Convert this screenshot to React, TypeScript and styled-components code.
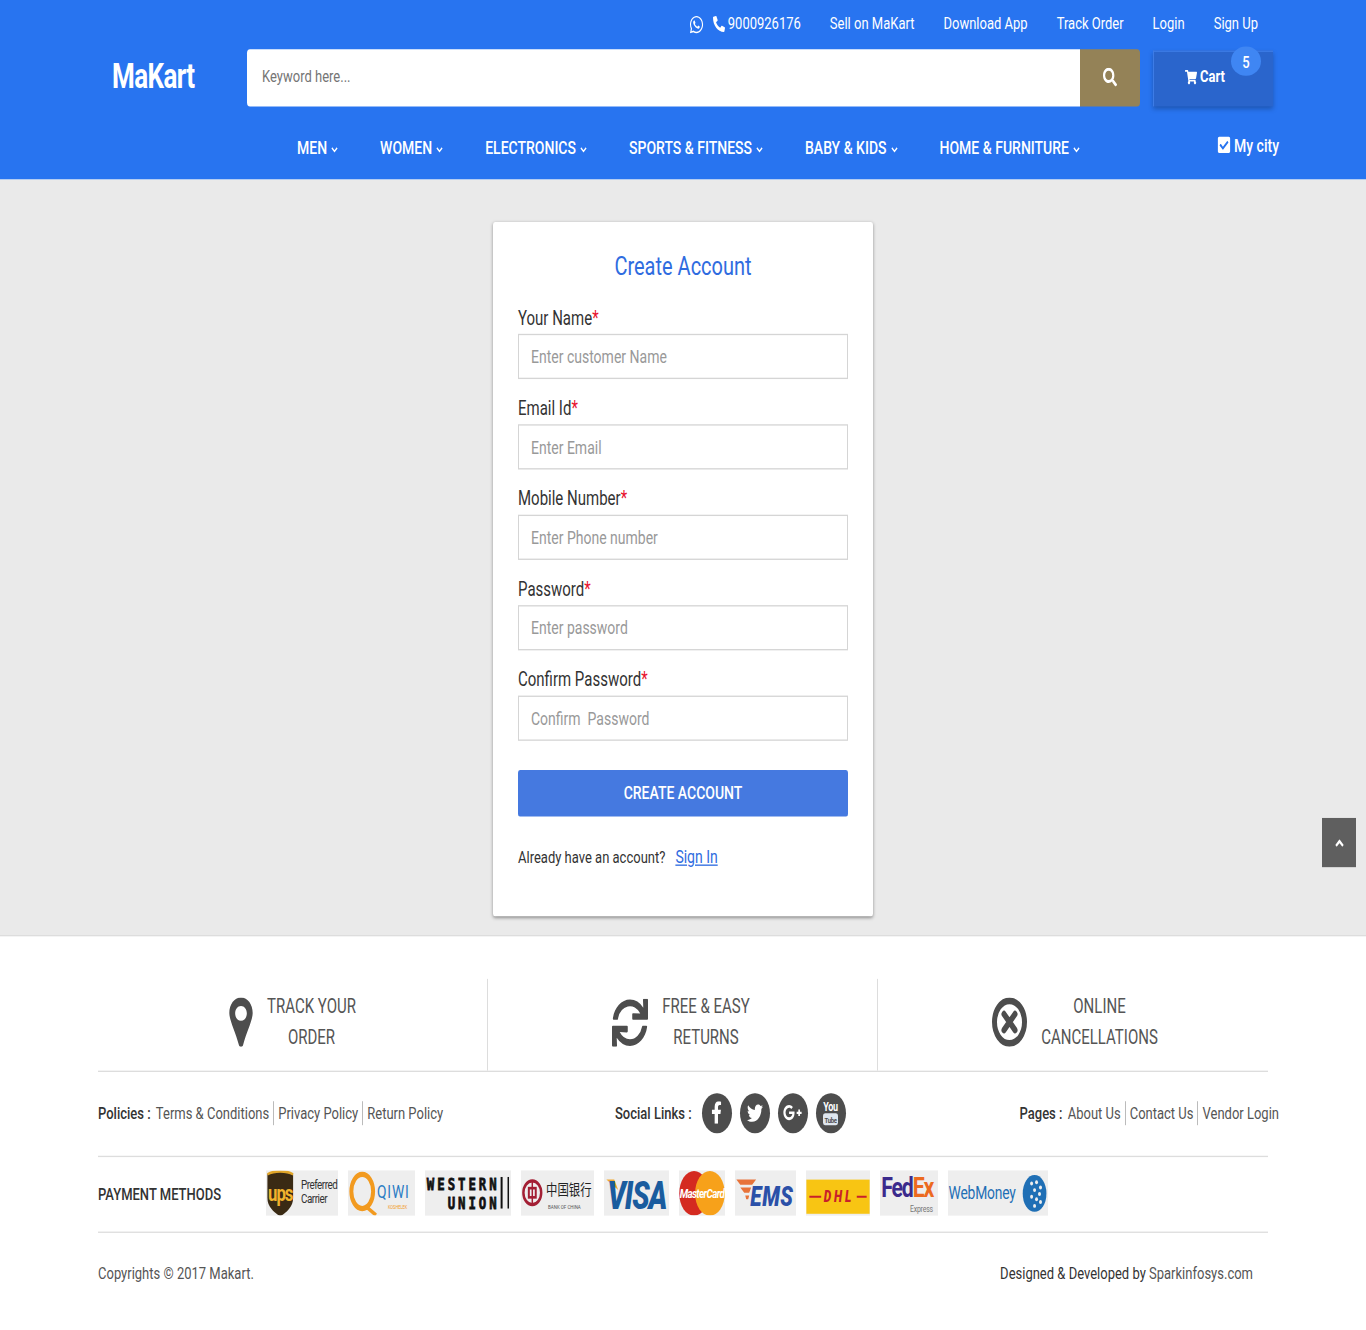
import React from "react";
import styled, { createGlobalStyle } from "styled-components";
import { FaWhatsapp, FaPhone, FaSearch, FaShoppingCart, FaCheckSquare, FaSync, FaFacebookF, FaTwitter, FaGooglePlusG } from "react-icons/fa";

const Global = createGlobalStyle`
  html, body { margin: 0; padding: 0; background: #fff; }
  * { box-sizing: border-box; }
  body { font-family: Roboto, "Liberation Sans", sans-serif; color: #333; }
`;

const Viewport = styled.div`width: 1366px; height: 1330px; overflow: hidden;`;
const Stretch = styled.div`
  position: relative; width: 1366px; height: 1000px;
  transform: scaleY(1.33); transform-origin: 0 0; background: #fff;
`;

const Header = styled.header`height: 134.6px; background: #2874f0; color: #fff;`;
const TopBar = styled.div`
  height: 37.3px; display: flex; justify-content: flex-end; align-items: center;
  gap: 29px; padding-right: 108px; font-size: 13px; padding-bottom: 2px;
`;
const TopLink = styled.a`display: flex; align-items: center; gap: 3px; color: #fff;`;
const SearchRow = styled.div`height: 43px; display: flex; padding-left: 112px;`;
const Logo = styled.div`width: 135px; font-size: 26px; font-weight: 700; letter-spacing: -0.6px; line-height: 41px;`;
const SearchBox = styled.div`width: 893px; display: flex;`;
const SearchInput = styled.input`
  flex: 1; height: 43px; border: 0; outline: 0; padding: 0 15px 3px; background: #fff;
  border-radius: 3px 0 0 3px; font: 13px Roboto, sans-serif;
  &::placeholder { color: #757575; opacity: 1; }
`;
const SearchButton = styled.button`
  width: 60px; height: 43px; padding: 0 0 1px; border: 0; background: #948257; color: #fff; font-size: 14px;
  border-radius: 0 3px 3px 0; display: flex; align-items: center; justify-content: center;
`;
const CartButton = styled.div`
  position: relative; width: 120px; height: 42px; margin-top: 1px; margin-left: 13px; background: #2a65cc;
  box-shadow: 0 2px 4px rgba(0,0,0,.25); display: flex; align-items: center; justify-content: center; gap: 3px;
  font-size: 13px; font-weight: 700; padding: 0 17px 4px 0; border-top: 1px solid #3d7ce6; border-left: 1px solid #3d7ce6;
`;
const Badge = styled.span`
  position: absolute; top: -4.500px; right: 12px; width: 30px; height: 22.500px; border-radius: 50%;
  background: #3f86f3; font-size: 13px; font-weight: 500; display: flex; align-items: center; justify-content: center;
`;
const NavRow = styled.nav`height: 54.3px; display: flex; align-items: center; padding: 7px 87px 0 297px;`;
const NavList = styled.div`display: flex; gap: 42px; font-size: 14px; font-weight: 500;`;
const NavItem = styled.a`display: flex; align-items: center; gap: 4px; color: #fff;`;
const ChevronMark = styled.svg`width: 7px; height: 5px; margin-top: 3px; fill: none; stroke: currentColor; stroke-width: 1.400;`;
const MyCity = styled.div`
  margin-left: auto; display: flex; align-items: center; gap: 3px; font-size: 14px; font-weight: 500; margin-bottom: 3px;
`;

const Main = styled.main`height: 568.4px; background: #eaeaea; padding-top: 32.4px;`;
const Card = styled.section`
  width: 380px; height: 522px; margin: 0 auto; padding: 20.5px 25px 0; background: #fff;
  border-radius: 2px; box-shadow: 0 1px 3px rgba(0,0,0,.4);
`;
const Title = styled.h1`
  margin: 0 0 2.5px; font-size: 20px; line-height: 27px; font-weight: 400; color: #2f6ce0; text-align: center;
`;
const Field = styled.div`height: 67.9px; padding-top: 8px;`;
const Label = styled.label`display: block; height: 26px; line-height: 29px; font-size: 15px; color: #333;`;
const Star = styled.span`color: #e8112d;`;
const Input = styled.input`
  display: block; width: 100%; height: 34px; border: 1px solid #d5d5d5; border-bottom-width: 1.5px; outline: 0; padding: 0 12px;
  background: #fff; font: 14px Roboto, sans-serif;
  &::placeholder { color: #999; opacity: 1; }
`;
const Submit = styled.button`
  display: block; width: 100%; height: 35.3px; margin-top: 22.5px; padding: 0 0 2px; border: 0; border-radius: 2px; background: #4579e0; color: #fff;
  font: 500 14px Roboto, sans-serif;
`;
const SignLine = styled.p`margin: 20px 0 0; line-height: 20px; font-size: 13px; color: #333;`;
const SignLink = styled.a`margin-left: 10px; font-size: 14px; color: #2f6ce0; text-decoration: underline;`;

const ScrollTop = styled.div`
  position: absolute; left: 1322px; top: 615px; width: 34px; height: 37px; background: #5f5f5f; color: #fff;
  display: flex; align-items: center; justify-content: center;
`;
const CaretMark = styled.svg`width: 9px; height: 6px; fill: none; stroke: currentColor; stroke-width: 2;`;

const Footer = styled.footer`border-top: 1px solid #ddd; height: 296.6px; padding: 32px 98px 0;`;
const Features = styled.div`width: 1170px; display: grid; grid-template-columns: repeat(3, 390px); border-bottom: 1px solid #ddd;`;
const Feature = styled.div<{ $last?: boolean; $left?: number; $right?: number }>`
  height: 69px; padding: 0 ${p => p.$right || 0}px 3px ${p => p.$left || 0}px; display: flex; align-items: center; justify-content: center; gap: 14px;
  border-right: ${p => (p.$last ? "0" : "1px solid #ddd")};
  color: #4d4d4d;
`;
const FeatureText = styled.div`font-size: 15px; line-height: 22.6px; text-align: center; color: #555;`;
const LinksRow = styled.div`width: 1181px; height: 62.6px; padding-bottom: 1px; display: flex; align-items: center; font-size: 13px; color: #555;`;
const Group = styled.div<{ $w?: number }>`display: flex; align-items: center; ${p => (p.$w ? `width: ${p.$w}px;` : "margin-left: auto;")}`;
const Strong = styled.b`font-weight: 500; color: #333; margin-right: 2px; white-space: pre;`;
const PolicyLink = styled.a<{ $first?: boolean; $end?: boolean }>`
  border-left: ${p => (p.$first ? "0" : "1px solid #bbb")}; line-height: 18px; white-space: nowrap;
  padding-left: ${p => (p.$first ? 0 : 4)}px; padding-right: ${p => (p.$end ? 0 : 4)}px;
`;
const SocialRow = styled.div`display: flex; gap: 8px; margin-left: 8px;`;
const SocialCircle = styled.a`
  width: 30px; height: 30.5px; border-radius: 50%; background: #4d4d4d; color: #fff; display: flex; align-items: center; justify-content: center; font-size: 15px;
`;
const YouTube = styled.span`display: flex; flex-direction: column; align-items: center; font-size: 9px; font-weight: 700; line-height: 9px; letter-spacing: -0.3px;`;
const Tube = styled.span`background: #dfe6ee; color: #4d4d4d; border-radius: 2px; padding: 0 1px; font-size: 6px; line-height: 9px;`;

const PaymentRow = styled.div`
  width: 1170px; height: 58px; padding-bottom: 1px; display: flex; align-items: center; border-top: 1.5px solid #ddd; border-bottom: 1.5px solid #ddd;
`;
const PayTitle = styled.div`width: 168px; font-size: 13px; font-weight: 500; color: #333;`;
const Logos = styled.div`display: flex; gap: 10px;`;
const Tile = styled.div<{ $w: number }>`
  width: ${p => p.$w}px; height: 34.6px; background: #eeeeee; overflow: hidden;
  svg { display: block; width: 100%; height: 100%; }
`;
const BottomRow = styled.div`width: 1170px; height: 61.500px; display: flex; align-items: center; justify-content: space-between; padding-right: 15px; font-size: 13px; color: #555;`;
const Dark = styled.span`color: #333;`;

const PinIcon = () => (
  <svg width="24" height="37" viewBox="0 0 24 38" fill="#4d4d4d" aria-hidden>
    <path fillRule="evenodd" d="M12 0C5 0 0 5.500 0 12c0 5.500 6 14 10 25 .7 1.400 3.300 1.400 4 0C18 26 24 17.500 24 12 24 5.500 19 0 12 0zm0 6.500c3.500 0 6 2.500 6 5.700S15.500 18 12 18 6 15.400 6 12.200 8.500 6.500 12 6.500z" />
  </svg>
);
const CancelIcon = () => (
  <svg width="35" height="37" viewBox="0 0 35 37" aria-hidden>
    <ellipse cx="17.500" cy="18.500" rx="15" ry="16" fill="none" stroke="#4d4d4d" strokeWidth="5" />
    <path d="M12 12.500l11 12M23 12.500l-11 12" stroke="#4d4d4d" strokeWidth="5" strokeLinecap="round" />
  </svg>
);

const fields = [
  ["Your Name", "Enter customer Name"],
  ["Email Id", "Enter Email"],
  ["Mobile Number", "Enter Phone number"],
  ["Password", "Enter password"],
  ["Confirm Password", "Confirm\u00a0 Password"],
];
const navs = ["MEN", "WOMEN", "ELECTRONICS", "SPORTS & FITNESS", "BABY & KIDS", "HOME & FURNITURE"];

export default function App() {
  return (
    <Viewport>
      <Global />
      <Stretch>
        <Header>
          <TopBar>
            <TopLink>
              <FaWhatsapp size={15} style={{ marginRight: 6, marginTop: 2 }} />
              <FaPhone size={12} style={{ transform: "scaleX(-1)", marginTop: 1 }} />
              9000926176
            </TopLink>
            <TopLink>Sell on MaKart</TopLink>
            <TopLink>Download App</TopLink>
            <TopLink>Track Order</TopLink>
            <TopLink>Login</TopLink>
            <TopLink>Sign Up</TopLink>
          </TopBar>
          <SearchRow>
            <Logo>MaKart</Logo>
            <SearchBox>
              <SearchInput placeholder="Keyword here..." />
              <SearchButton aria-label="Search"><FaSearch /></SearchButton>
            </SearchBox>
            <CartButton>
              <FaShoppingCart size={12} />
              Cart
              <Badge>5</Badge>
            </CartButton>
          </SearchRow>
          <NavRow>
            <NavList>
              {navs.map(n => (
                <NavItem key={n}>
                  {n}
                  <ChevronMark viewBox="0 0 8 5" aria-hidden><path d="M1 1l3 3 3-3" /></ChevronMark>
                </NavItem>
              ))}
            </NavList>
            <MyCity><FaCheckSquare size={14} />My city</MyCity>
          </NavRow>
        </Header>
        <Main>
          <Card>
            <Title>Create Account</Title>
            {fields.map(([l, p]) => (
              <Field key={l}>
                <Label>{l}<Star>*</Star></Label>
                <Input placeholder={p} />
              </Field>
            ))}
            <Submit>CREATE ACCOUNT</Submit>
            <SignLine>Already have an account?<SignLink>Sign In</SignLink></SignLine>
          </Card>
        </Main>
        <ScrollTop><CaretMark viewBox="0 0 9 6" aria-hidden><path d="M1 5l3.500-3.500L8 5" /></CaretMark></ScrollTop>
        <Footer>
          <Features>
            <Feature>
              <PinIcon />
              <FeatureText>TRACK YOUR<br />ORDER</FeatureText>
            </Feature>
            <Feature $right={3}>
              <FaSync size={36} />
              <FeatureText>FREE &amp; EASY<br />RETURNS</FeatureText>
            </Feature>
            <Feature $last $left={4}>
              <CancelIcon />
              <FeatureText>ONLINE<br />CANCELLATIONS</FeatureText>
            </Feature>
          </Features>
          <LinksRow>
            <Group $w={517}>
              <Strong>Policies : </Strong>
              <PolicyLink $first>Terms &amp; Conditions</PolicyLink>
              <PolicyLink>Privacy Policy</PolicyLink>
              <PolicyLink>Return Policy</PolicyLink>
            </Group>
            <Group $w={400}>
              <Strong>Social Links :</Strong>
              <SocialRow>
                <SocialCircle><FaFacebookF size={17} /></SocialCircle>
                <SocialCircle><FaTwitter size={16} /></SocialCircle>
                <SocialCircle><FaGooglePlusG size={19} /></SocialCircle>
                <SocialCircle><YouTube>You<Tube>Tube</Tube></YouTube></SocialCircle>
              </SocialRow>
            </Group>
            <Group>
              <Strong>Pages : </Strong>
              <PolicyLink $first>About Us</PolicyLink>
              <PolicyLink>Contact Us</PolicyLink>
              <PolicyLink $end>Vendor Login</PolicyLink>
            </Group>
          </LinksRow>
          <PaymentRow>
            <PayTitle>PAYMENT METHODS</PayTitle>
            <Logos>
              <Tile $w={72}>
                <svg viewBox="0 0 72 35">
                  <path d="M1 3C8 0 20 0 27 3v18c0 7-7 11-13 14C8 32 1 28 1 21z" fill="#3a2a14" />
                  <path d="M1 3C8 0 20 0 27 3" stroke="#e0a52a" strokeWidth="2" fill="none" />
                  <text x="14" y="23" fontSize="17" fontWeight="700" fill="#f0b32d" textAnchor="middle" fontFamily="Roboto" letterSpacing="-1">ups</text>
                  <text x="35" y="14" fontSize="10" fill="#333" fontFamily="Roboto" letterSpacing="-.5">Preferred</text>
                  <text x="35" y="25" fontSize="10" fill="#333" fontFamily="Roboto" letterSpacing="-.5">Carrier</text>
                </svg>
              </Tile>
              <Tile $w={67}>
                <svg viewBox="0 0 67 35">
                  <ellipse cx="14" cy="16" rx="11" ry="13" fill="none" stroke="#f29a1f" strokeWidth="4" />
                  <path d="M17 27l11 7" stroke="#f29a1f" strokeWidth="3" />
                  <text x="29" y="21" fontSize="14" fill="#2a7cc4" fontFamily="Roboto" letterSpacing=".8">QIWI</text>
                  <text x="40" y="29" fontSize="4" fill="#f29a1f" fontFamily="Roboto">KOSHELEK</text>
                </svg>
              </Tile>
              <Tile $w={86}>
                <svg viewBox="0 0 86 35">
                  <text x="75" y="15" fontSize="12.500" fontWeight="700" fill="#111" stroke="#111" strokeWidth=".6" textAnchor="end" fontFamily="DejaVu Sans Mono" letterSpacing="3">WESTERN</text>
                  <text x="75" y="29.500" fontSize="12.500" fontWeight="700" fill="#111" stroke="#111" strokeWidth=".6" textAnchor="end" fontFamily="DejaVu Sans Mono" letterSpacing="3">UNION</text>
                  <rect x="76" y="5" width="2" height="24" fill="#111" />
                  <rect x="83" y="5" width="1.500" height="24" fill="#111" />
                </svg>
              </Tile>
              <Tile $w={73}>
                <svg viewBox="0 0 73 35">
                  <circle cx="11" cy="17" r="9" fill="none" stroke="#a31f34" strokeWidth="2.500" />
                  <rect x="7.500" y="13.500" width="7" height="7" fill="none" stroke="#a31f34" strokeWidth="2" />
                  <path d="M11 8v18" stroke="#a31f34" strokeWidth="1.500" />
                  <text x="25" y="19" fontSize="11.500" fill="#222" fontFamily="Noto Sans CJK SC">中国银行</text>
                  <text x="27" y="29" fontSize="4.500" fill="#555" fontFamily="Roboto">BANK OF CHINA</text>
                </svg>
              </Tile>
              <Tile $w={65}>
                <svg viewBox="0 0 65 35">
                  <path d="M2 7h8l4 8z" fill="#f0a830" />
                  <text x="33" y="29" fontSize="29" fontWeight="900" fontStyle="italic" fill="#1a5c9e" textAnchor="middle" fontFamily="Roboto" letterSpacing="-1">VISA</text>
                </svg>
              </Tile>
              <Tile $w={46}>
                <svg viewBox="0 0 46 35">
                  <ellipse cx="15" cy="17.500" rx="15" ry="17" fill="#d42a20" />
                  <ellipse cx="31" cy="17.500" rx="15" ry="17" fill="#f7a11a" />
                  <text x="23" y="21" fontSize="10" fontWeight="700" fontStyle="italic" fill="#fff" textAnchor="middle" fontFamily="Roboto" letterSpacing="-.6">MasterCard</text>
                </svg>
              </Tile>
              <Tile $w={61}>
                <svg viewBox="0 0 61 35">
                  <path d="M1 7h20l-4 4H5zM5 13h11l-2 4H9zM10 19h4l-1 3h-2z" fill="#e8733a" />
                  <text x="37" y="27" fontSize="21" fontWeight="900" fontStyle="italic" fill="#2b50a8" textAnchor="middle" fontFamily="Roboto" letterSpacing=".6">EMS</text>
                </svg>
              </Tile>
              <Tile $w={64}>
                <svg viewBox="0 0 64 35">
                  <rect x="0" y="7" width="64" height="26" fill="#f8c513" />
                  <text x="33" y="24" fontSize="12" fontWeight="900" fontStyle="italic" fill="#c8202a" textAnchor="middle" fontFamily="Roboto" letterSpacing="3">DHL</text>
                  <path d="M3 20h12M51 20h10" stroke="#c8202a" strokeWidth="1.500" />
                </svg>
              </Tile>
              <Tile $w={58}>
                <svg viewBox="0 0 58 35">
                  <text x="1" y="20" fontSize="21.500" fontWeight="700" fill="#3b2a8c" fontFamily="Roboto" letterSpacing="-1.200">Fed<tspan fill="#ec6a1f">Ex</tspan></text>
                  <text x="30" y="32" fontSize="7" fill="#777" fontFamily="Roboto" letterSpacing="-.2">Express</text>
                </svg>
              </Tile>
              <Tile $w={100}>
                <svg viewBox="0 0 100 35">
                  <text x="0" y="22" fontSize="14" fill="#1f6fb5" fontFamily="Roboto" letterSpacing="-.2">WebMoney</text>
                  <ellipse cx="87" cy="17.500" rx="12" ry="14" fill="#1f6fb5" />
                  <g fill="#eeeeee">
                    <circle cx="84" cy="10" r="1.500" /><circle cx="89" cy="9" r="1.500" /><circle cx="93" cy="13" r="1.500" />
                    <circle cx="87" cy="15" r="1.500" /><circle cx="92" cy="18" r="1.500" /><circle cx="84" cy="20" r="1.500" />
                    <circle cx="89" cy="22" r="1.500" /><circle cx="93" cy="24" r="1.500" /><circle cx="87" cy="27" r="1.500" />
                  </g>
                </svg>
              </Tile>
            </Logos>
          </PaymentRow>
          <BottomRow>
            <span>Copyrights © 2017 Makart.</span>
            <span><Dark>Designed &amp; Developed by</Dark> Sparkinfosys.com</span>
          </BottomRow>
        </Footer>
      </Stretch>
    </Viewport>
  );
}
